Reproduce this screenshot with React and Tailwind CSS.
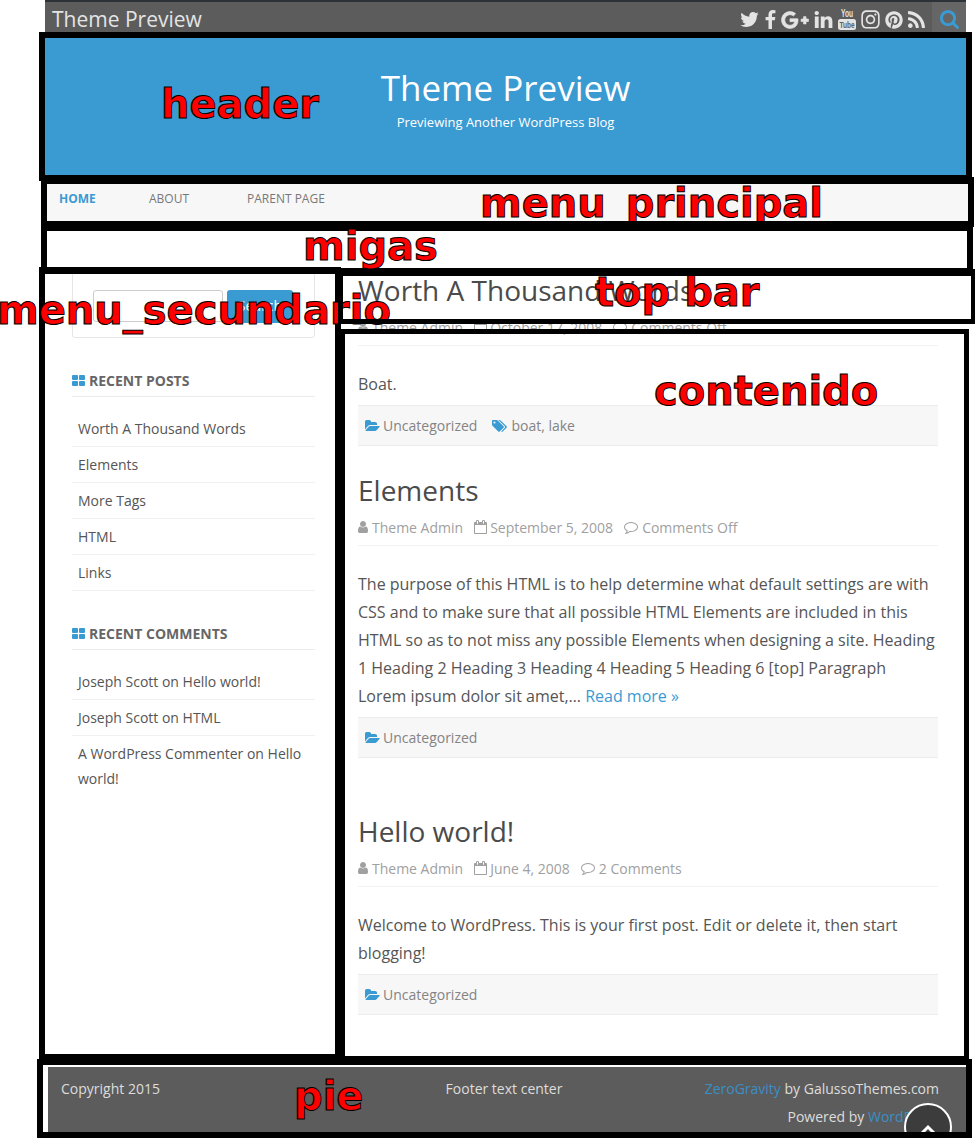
import React from "react";
import { FaGooglePlusG, FaInstagram, FaPinterest } from "react-icons/fa";

const P = {
  folder: ["0 0 1920 1792", "M1879 952q0 31-31 66l-336 396q-43 51-120.5 86.5t-143.5 35.5h-1088q-34 0-60.5-13t-26.5-43q0-31 31-66l336-396q43-51 120.5-86.5t143.5-35.5h1088q34 0 60.5 13t26.5 43zm-343-344v160h-832q-94 0-197 47.5t-164 119.5l-337 396-5 6q0-4-.5-12.5t-.5-12.5v-960q0-92 66-158t158-66h320q92 0 158 66t66 158v32h544q92 0 158 66t66 158z"],
  tags: ["0 0 1920 1792", "M448 448q0-53-37.5-90.5t-90.5-37.5-90.5 37.5-37.5 90.5 37.5 90.5 90.5 37.5 90.5-37.5 37.5-90.5zm1067 576q0 53-37 90l-491 492q-39 37-91 37-53 0-90-37l-715-716q-38-37-64.5-101t-26.5-117v-416q0-52 38-90t90-38h416q53 0 117 26.5t102 64.5l715 714q37 39 37 91zm384 0q0 53-37 90l-491 492q-39 37-91 37-36 0-59-14t-53-45l470-470q37-37 37-90 0-52-37-91l-715-714q-38-38-102-64.5t-117-26.5h224q53 0 117 26.5t102 64.5l715 714q37 39 37 91z"],
  comment: ["0 0 1792 1792", "M896 384q-204 0-381.5 69.5t-282 187.5-104.5 255q0 112 71.5 213.5t201.5 175.5l87 50-27 96q-24 91-70 172 152-63 275-171l43-38 57 6q69 8 130 8 204 0 381.5-69.5t282-187.5 104.5-255-104.5-255-282-187.5-381.5-69.5zm896 512q0 174-120 321.5t-326 233-450 85.5q-70 0-145-8-198 175-460 242-49 14-114 22h-5q-15 0-27-10.5t-16-27.5v-1q-3-4-.5-12t2-10 4.5-9.5l6-9 7-8.5 8-9q7-8 31-34.5t34.5-38 31-39.5 32.5-51 27-59 26-76q-157-89-247.5-220t-90.5-281q0-174 120-321.5t326-233 450-85.5 450 85.5 326 233 120 321.5z"],
  calendar: ["64 0 1664 1792", "M192 1664h1408v-1024h-1408v1024zm384-1216v-288q0-14-9-23t-23-9h-64q-14 0-23 9t-9 23v288q0 14 9 23t23 9h64q14 0 23-9t9-23zm768 0v-288q0-14-9-23t-23-9h-64q-14 0-23 9t-9 23v288q0 14 9 23t23 9h64q14 0 23-9t9-23zm384-64v1280q0 52-38 90t-90 38h-1408q-52 0-90-38t-38-90v-1280q0-52 38-90t90-38h128v-96q0-66 47-113t113-47h64q66 0 113 47t47 113v96h384v-96q0-66 47-113t113-47h64q66 0 113 47t47 113v96h128q52 0 90 38t38 90z"],
  user: ["256 0 1280 1792", "M1536 1399q0 109-62.5 187t-150.5 78h-854q-88 0-150.5-78t-62.5-187q0-85 8.5-160.5t31.5-152 58.5-131 94-89 134.5-34.5q131 128 313 128t313-128q76 0 134.5 34.5t94 89 58.5 131 31.5 152 8.5 160.5zm-256-887q0 159-112.5 271.5t-271.5 112.5-271.5-112.5-112.5-271.5 112.5-271.5 271.5-112.5 271.5 112.5 112.5 271.5z"],
  twitter: ["108 256 1576 1280", "M1684 408q-67 98-162 167 1 14 1 42 0 130-38 259.5t-115.5 248.5-184.5 210.5-258 146-323 54.5q-271 0-496-145 35 4 78 4 225 0 401-138-105-2-188-64.5t-114-159.5q33 5 61 5 43 0 85-11-112-23-185.5-111.5t-73.5-205.5v-4q68 38 146 41-66-44-105-115t-39-154q0-88 44-163 121 149 294.5 238.5t371.5 99.5q-8-38-8-74 0-134 94.5-228.5t228.5-94.5q140 0 236 102 109-21 205-78-37 115-142 178 93-10 186-50z"],
  search: ["64 128 1664 1664", "M1216 832q0-185-131.5-316.5t-316.5-131.5-316.5 131.5-131.5 316.5 131.5 316.5 316.5 131.5 316.5-131.5 131.5-316.5zm512 832q0 52-38 90t-90 38q-54 0-90-38l-343-342q-179 124-399 124-143 0-273.5-55.5t-225-150-150-225-55.5-273.5 55.5-273.5 150-225 225-150 273.5-55.5 273.5 55.5 225 150 150 225 55.5 273.5q0 220-124 399l343 343q37 37 37 90z"],
  facebook: ["479 0 864 1664", "M1343 12v264h-157q-86 0-116 36t-30 108v189h293l-39 296h-254v759h-306v-759h-255v-296h255v-218q0-186 104-288.5t277-102.5q147 0 228 12z"],
  linkedin: ["128 148 1536 1468", "M477 625v991h-330v-991h330zm21-306q1 73-50.5 122t-135.5 49h-2q-82 0-132-49t-50-122q0-74 51.5-122.5t134.5-48.5 133 48.5 51 122.5zm1166 729v568h-329v-530q0-105-40.5-164.5t-126.5-59.5q-63 0-105.5 34.5t-63.5 85.5q-11 30-11 81v553h-329q2-399 2-647t-1-296l-1-48h329v144h-2q20-32 41-56t56.5-52 87-43.5 114.5-15.5q171 0 275 113.5t104 332.5z"],
  rss: ["192 128 1408 1408", "M576 1344q0 80-56 136t-136 56-136-56-56-136 56-136 136-56 136 56 56 136zm512 123q2 28-17 48-18 21-47 21h-135q-25 0-43-16.5t-20-41.5q-22-229-184.5-391.5t-391.5-184.5q-25-2-41.5-20t-16.5-43v-135q0-29 21-47 17-17 43-17h5q160 13 306 80.5t259 181.5q114 113 181.5 259t80.5 306zm512 2q2 27-18 47-18 20-46 20h-143q-26 0-44.5-17.5t-19.5-42.5q-12-215-101-408.5t-231.5-336-336-231.5-408.5-102q-25-1-42.5-19.5t-17.5-43.5v-143q0-28 20-46 18-18 44-18h3q262 13 501.5 120t425.5 294q187 186 294 425.5t120 501.5z"],
};

function Icon({ name, className }) {
  const [box, d] = P[name];
  return (
    <svg viewBox={box} className={`shrink-0 ${className}`} fill="currentColor">
      <path d={d} />
    </svg>
  );
}

function YouTube() {
  return (
    <svg viewBox="0 0 18 21" className="h-[21px] w-[18px] shrink-0 overflow-visible" fill="currentColor">
      <text x="3" y="8" fontSize="10" fontWeight="bold" textLength="12" lengthAdjust="spacingAndGlyphs" fontFamily="Liberation Sans, sans-serif">You</text>
      <rect x="0" y="10" width="18" height="11" rx="2.5" />
      <text x="1.5" y="19" fontSize="9.5" fontWeight="bold" textLength="15" lengthAdjust="spacingAndGlyphs" fill="#5c5c5c" fontFamily="Liberation Sans, sans-serif">Tube</text>
    </svg>
  );
}

function TopBar() {
  return (
    <div className="flex h-[38px] border-t-2 border-[#2d3236] bg-[#5c5c5c] text-[#e4e4e4]">
      <div className="flex-1 pl-[7px] text-[21px] leading-[34px]">Theme Preview</div>
      <div className="flex h-[35px] items-center">
        <Icon name="twitter" className="mr-[6px] h-[15px] w-[19px]" />
        <Icon name="facebook" className="mr-[5px] h-[19px] w-[11px]" />
        <FaGooglePlusG className="mr-[5px] h-[28px] w-[28px]" stroke="currentColor" strokeWidth="16" />
        <Icon name="linkedin" className="mr-[5px] h-[17px] w-[19px]" />
        <YouTube />
        <FaInstagram className="ml-[4px] size-[21px]" />
        <FaPinterest className="ml-[4px] size-[18px]" />
        <Icon name="rss" className="ml-[5px] size-[17px]" />
      </div>
      <div className="ml-[7px] flex w-[34px] justify-center bg-[#666] pt-[8px]">
        <Icon name="search" className="size-[19px] text-[#3a9ad2]" />
      </div>
    </div>
  );
}

function Meta({ date, comments }) {
  return (
    <div className="flex h-[31px] items-start border-b border-[#f2f2f2] text-[14px] leading-[25px] text-[#a0a0a0]">
      <Icon name="user" className="mr-[4px] mt-[5px] h-[14px] w-[10px]" />
      Theme Admin
      <Icon name="calendar" className="ml-[11px] mr-[3px] mt-[5px] h-[14px] w-[13px]" />
      {date}
      <Icon name="comment" className="ml-[11px] mr-[4px] mt-[5px] size-[14px]" />
      {comments}
    </div>
  );
}

function Tax({ tags }) {
  return (
    <div className="flex h-[41px] items-center border-y border-[#ececec] bg-[#f7f7f7] pl-[7px] text-[14px] text-[#848484]">
      <Icon name="folder" className="mr-[3px] h-[14px] w-[15px] text-[#3a9ad2]" />
      Uncategorized
      {tags && (
        <>
          <Icon name="tags" className="ml-[15px] mr-[4px] h-[14px] w-[15px] text-[#3a9ad2]" />
          {tags}
        </>
      )}
    </div>
  );
}

function Post({ title, date, comments, children, tags, className }) {
  return (
    <article className={className}>
      <h2 className="h-[43px] text-[28px] leading-[36px] text-[#4b4b4b]">{title}</h2>
      <Meta date={date} comments={comments} />
      <div className="pb-[7px] pt-[24px] text-[16px] leading-[28px] text-[#555]">{children}</div>
      <Tax tags={tags} />
    </article>
  );
}

function Widget({ title, items, className }) {
  return (
    <section className={className}>
      <h3 className="flex h-[32px] items-start border-b border-[#ebebeb] text-[14px] font-bold leading-[32px] text-[#666]">
        <span className="mr-[4px] mt-[10px] grid h-[11px] w-[13px] grid-cols-2 gap-px">
          <i className="rounded-[1px] bg-[#3a9ad2]" />
          <i className="rounded-[1px] bg-[#3a9ad2]" />
          <i className="rounded-[1px] bg-[#3a9ad2]" />
          <i className="rounded-[1px] bg-[#3a9ad2]" />
        </span>
        {title}
      </h3>
      <ul className="mt-[14px] text-[14px] leading-[25px] text-[#555]">
        {items.map((t, i) => (
          <li key={t} className={`px-[6px] pb-[5px] pt-[5px] ${title === "RECENT COMMENTS" && i === items.length - 1 ? "" : "border-b border-[#f0f0f0]"}`}>{t}</li>
        ))}
      </ul>
    </section>
  );
}

function Frame({ className }) {
  return <div className={`pointer-events-none absolute border-black ${className}`} />;
}

function Label({ className, children }) {
  return (
    <div className={`pointer-events-none absolute whitespace-nowrap font-['DejaVu_Sans',sans-serif] text-[40px] font-bold leading-[40px] text-[#ff0000] [-webkit-text-stroke:1px_#000] ${className}`}>
      {children}
    </div>
  );
}

export default function App() {
  return (
    <div className="relative h-[1139px] w-[975px] overflow-hidden bg-white font-['Open_Sans',sans-serif]">
      <div className="ml-[45px] w-[921px]">
        <TopBar />
        <header className="flex h-[140px] flex-col items-center bg-[#3a9ad2] text-white">
          <h1 className="mt-[26px] text-[35px] leading-[48px]">Theme Preview</h1>
          <p className="text-[13px] leading-[20px]">Previewing Another WordPress Blog</p>
        </header>
        <nav className="-mr-[3px] flex h-[46px] bg-[#f7f7f7] pl-[14px] text-[12px] leading-[41px] text-[#777]">
          <span className="w-[90px] font-bold text-[#3a9ad2]">HOME</span>
          <span className="w-[98px]">ABOUT</span>
          <span>PARENT PAGE</span>
        </nav>
        <main className="flex h-[843px]">
          <aside className="ml-[27px] w-[243px] pt-[48px]">
            <div className="flex h-[66px] items-start rounded-[3px] border border-[#e6e6e6] pl-[20px] pt-[17px]">
              <div className="h-[32px] w-[130px] rounded-[3px] border border-[#ccc]" />
              <div className="ml-[4px] h-[33px] w-[66px] rounded-[3px] bg-[#3a9ad2] text-center text-[14px] leading-[32px] text-white">Search</div>
            </div>
            <Widget className="mt-[27px]" title="RECENT POSTS" items={["Worth A Thousand Words", "Elements", "More Tags", "HTML", "Links"]} />
            <Widget className="mt-[27px]" title="RECENT COMMENTS" items={["Joseph Scott on Hello world!", "Joseph Scott on HTML", "A WordPress Commenter on Hello world!"]} />
          </aside>
          <div className="ml-[43px] w-[580px] pt-[48px]">
            <Post title="Worth A Thousand Words" date="October 17, 2008" comments="Comments Off" tags="boat, lake" className="">
              Boat.
            </Post>
            <Post title="Elements" date="September 5, 2008" comments="Comments Off" className="mt-[26px]">
              The purpose of this HTML is to help determine what default settings are with CSS and to make sure that all possible HTML Elements are included in this HTML so as to not miss any possible Elements when designing a site. Heading 1 Heading 2 Heading 3 Heading 4 Heading 5 Heading 6 [top] Paragraph Lorem ipsum dolor sit amet,… <span className="text-[#3a9ad2]">Read more »</span>
            </Post>
            <Post title="Hello world!" date="June 4, 2008" comments="2 Comments" className="mt-[55px]">
              Welcome to WordPress. This is your first post. Edit or delete it, then start blogging!
            </Post>
          </div>
        </main>
        <footer className="relative ml-[3px] flex h-[70px] justify-between bg-[#5c5c5c] pl-[13px] pr-[27px] pt-[8px] text-[14px] leading-[28px] text-[#ddd]">
          <span className="w-[292px]">Copyright 2015</span>
          <span className="w-[292px] pl-[8px] text-center">Footer text center</span>
          <span className="w-[292px] text-right">
            <span className="text-[#3a8fc4]">ZeroGravity</span> by GalussoThemes.com
            <br />
            Powered by <span className="text-[#3a8fc4]">WordPress</span>
          </span>
          <span className="absolute right-[14px] top-[36px] flex size-[48px] justify-center rounded-full border-2 border-white bg-[#3c3c3c] pt-[19px]">
            <svg viewBox="0 0 16 10" className="h-[10px] w-[16px]" fill="none" stroke="white" strokeWidth="3"><path d="M2 9 8 3l6 6" /></svg>
          </span>
        </footer>
      </div>
      <div className="absolute bottom-0 left-0 h-px w-full bg-white" />

      <Frame className="left-[39px] top-[32px] h-[149px] w-[933px] border-[6px]" />
      <Label className="left-[161px] top-[84px]">header</Label>
      <Label className="left-[480px] top-[183px]">menu_principal</Label>
      <Frame className="left-[41px] top-[177px] h-[50px] w-[933px] border-[6px] border-t-[7px]" />
      <Frame className="left-[41px] top-[221px] h-[53px] w-[932px] border-[6px] border-t-[10px]" />
      <Label className="left-[303px] top-[226px]">migas</Label>
      <Frame className="left-[39px] top-[267px] h-[793px] w-[302px] border-[6px] border-t-[7px]" />
      <Label className="-left-[3px] top-[290px]">menu_secundario</Label>
      <Label className="left-[595px] top-[272px]">top bar</Label>
      <Frame className="left-[338px] top-[269px] h-[55px] w-[638px] border-[5px] border-t-[7px]" />
      <Frame className="left-[340px] top-[329px] h-[733px] w-[629px] border-[5px] border-b-[6px]" />
      <Label className="left-[654px] top-[371px]">contenido</Label>
      <Frame className="left-[37px] top-[1059px] h-[79px] w-[935px] border-[6px]" />
      <Label className="left-[294px] top-[1076px]">pie</Label>
    </div>
  );
}
